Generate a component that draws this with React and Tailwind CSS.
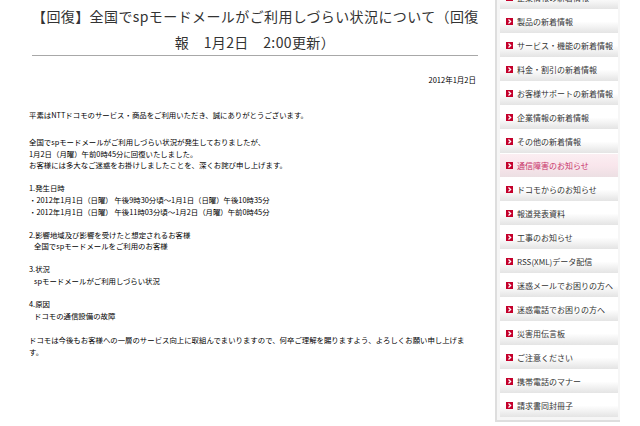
const menu = [
  "企業情報の新着情報",
  "製品の新着情報",
  "サービス・機能の新着情報",
  "料金・割引の新着情報",
  "お客様サポートの新着情報",
  "企業情報の新着情報",
  "その他の新着情報",
  "通信障害のお知らせ",
  "ドコモからのお知らせ",
  "報道発表資料",
  "工事のお知らせ",
  "RSS(XML)データ配信",
  "迷惑メールでお困りの方へ",
  "迷惑電話でお困りの方へ",
  "災害用伝言板",
  "ご注意ください",
  "携帯電話のマナー",
  "請求書同封冊子",
];

const ACTIVE = "通信障害のお知らせ";

const Arrow = () => (
  <svg width="7" height="7" viewBox="0 0 7 7" className="shrink-0">
    <rect width="7" height="7" fill="#c4002b" />
    <path d="M2.5 1.6 L4.6 3.5 L2.5 5.4" stroke="#fff" strokeWidth="1.3" fill="none" />
  </svg>
);

const MenuItem = ({ label }) => {
  const active = label === ACTIVE;
  return (
    <li
      className={`h-[24px] flex items-center gap-[4px] pl-[6px] border-t border-white ${
        active
          ? "bg-gradient-to-b from-[#fbeef2] via-[#f9e6ec] to-[#ecdfe3] text-[#c8336a]"
          : "bg-gradient-to-b from-white via-white to-[#e4e4e4] text-[#333]"
      }`}
    >
      <Arrow />
      <span className="text-[8px] leading-none whitespace-nowrap">{label}</span>
    </li>
  );
};

const App = () => {
  return (
    <div
      className="w-[640px] h-[426px] bg-white overflow-hidden flex text-black"
      style={{ fontFamily: '"MS PGothic", "Noto Sans CJK JP", sans-serif' }}
    >
      <main className="w-[495px] shrink-0 pl-[29px] pr-[17px]">
        <h1 className="ml-[3px] pt-[3px] text-center text-[14px] tracking-[0.4px] leading-[26px] font-normal text-[#333] whitespace-nowrap border-b border-[#a8a8a8]">
          【回復】全国でspモードメールがご利用しづらい状況について（回復
          <br />
          報　1月2日　2:00更新）
        </h1>

        <p className="mt-[18px] text-right text-[7.5px] leading-[12px] pr-[2px]">2012年1月2日</p>

        <div className="text-[7.4px] leading-[11.8px]">
          <p className="mt-[23px]">平素はNTTドコモのサービス・商品をご利用いただき、誠にありがとうございます。</p>
          <p className="mt-[15px]">
            全国でspモードメールがご利用しづらい状況が発生しておりましたが、
            <br />
            1月2日（月曜）午前0時45分に回復いたしました。
            <br />
            お客様には多大なご迷惑をお掛けしましたことを、深くお詫び申し上げます。
          </p>
          <p className="mt-[11px]">
            1.発生日時
            <br />
            ・2012年1月1日（日曜） 午後9時30分頃～1月1日（日曜）午後10時35分
            <br />
            ・2012年1月1日（日曜） 午後11時03分頃～1月2日（月曜）午前0時45分
          </p>
          <p className="mt-[11px]">
            2.影響地域及び影響を受けたと想定されるお客様
            <br />
            <span className="pl-[5px]">全国でspモードメールをご利用のお客様</span>
          </p>
          <p className="mt-[11px]">
            3.状況
            <br />
            <span className="pl-[5px]">spモードメールがご利用しづらい状況</span>
          </p>
          <p className="mt-[11px]">
            4.原因
            <br />
            <span className="pl-[5px]">ドコモの通信設備の故障</span>
          </p>
          <p className="mt-[13px]">
            ドコモは今後もお客様への一層のサービス向上に取組んでまいりますので、何卒ご理解を賜りますよう、よろしくお願い申し上げま
            <br />
            す。
          </p>
        </div>
      </main>

      <aside className="w-[145px] shrink-0">
        <div className="w-[125px] h-[422px] border-l-2 border-b-2 border-[#dedede] bg-[#f6f6f6] pl-[3px] pr-[2px] overflow-hidden">
          <ul className="-mt-[15px]">
            {menu.map((label, i) => (
              <MenuItem key={i} label={label} />
            ))}
          </ul>
        </div>
      </aside>
    </div>
  );
};

export default App;
